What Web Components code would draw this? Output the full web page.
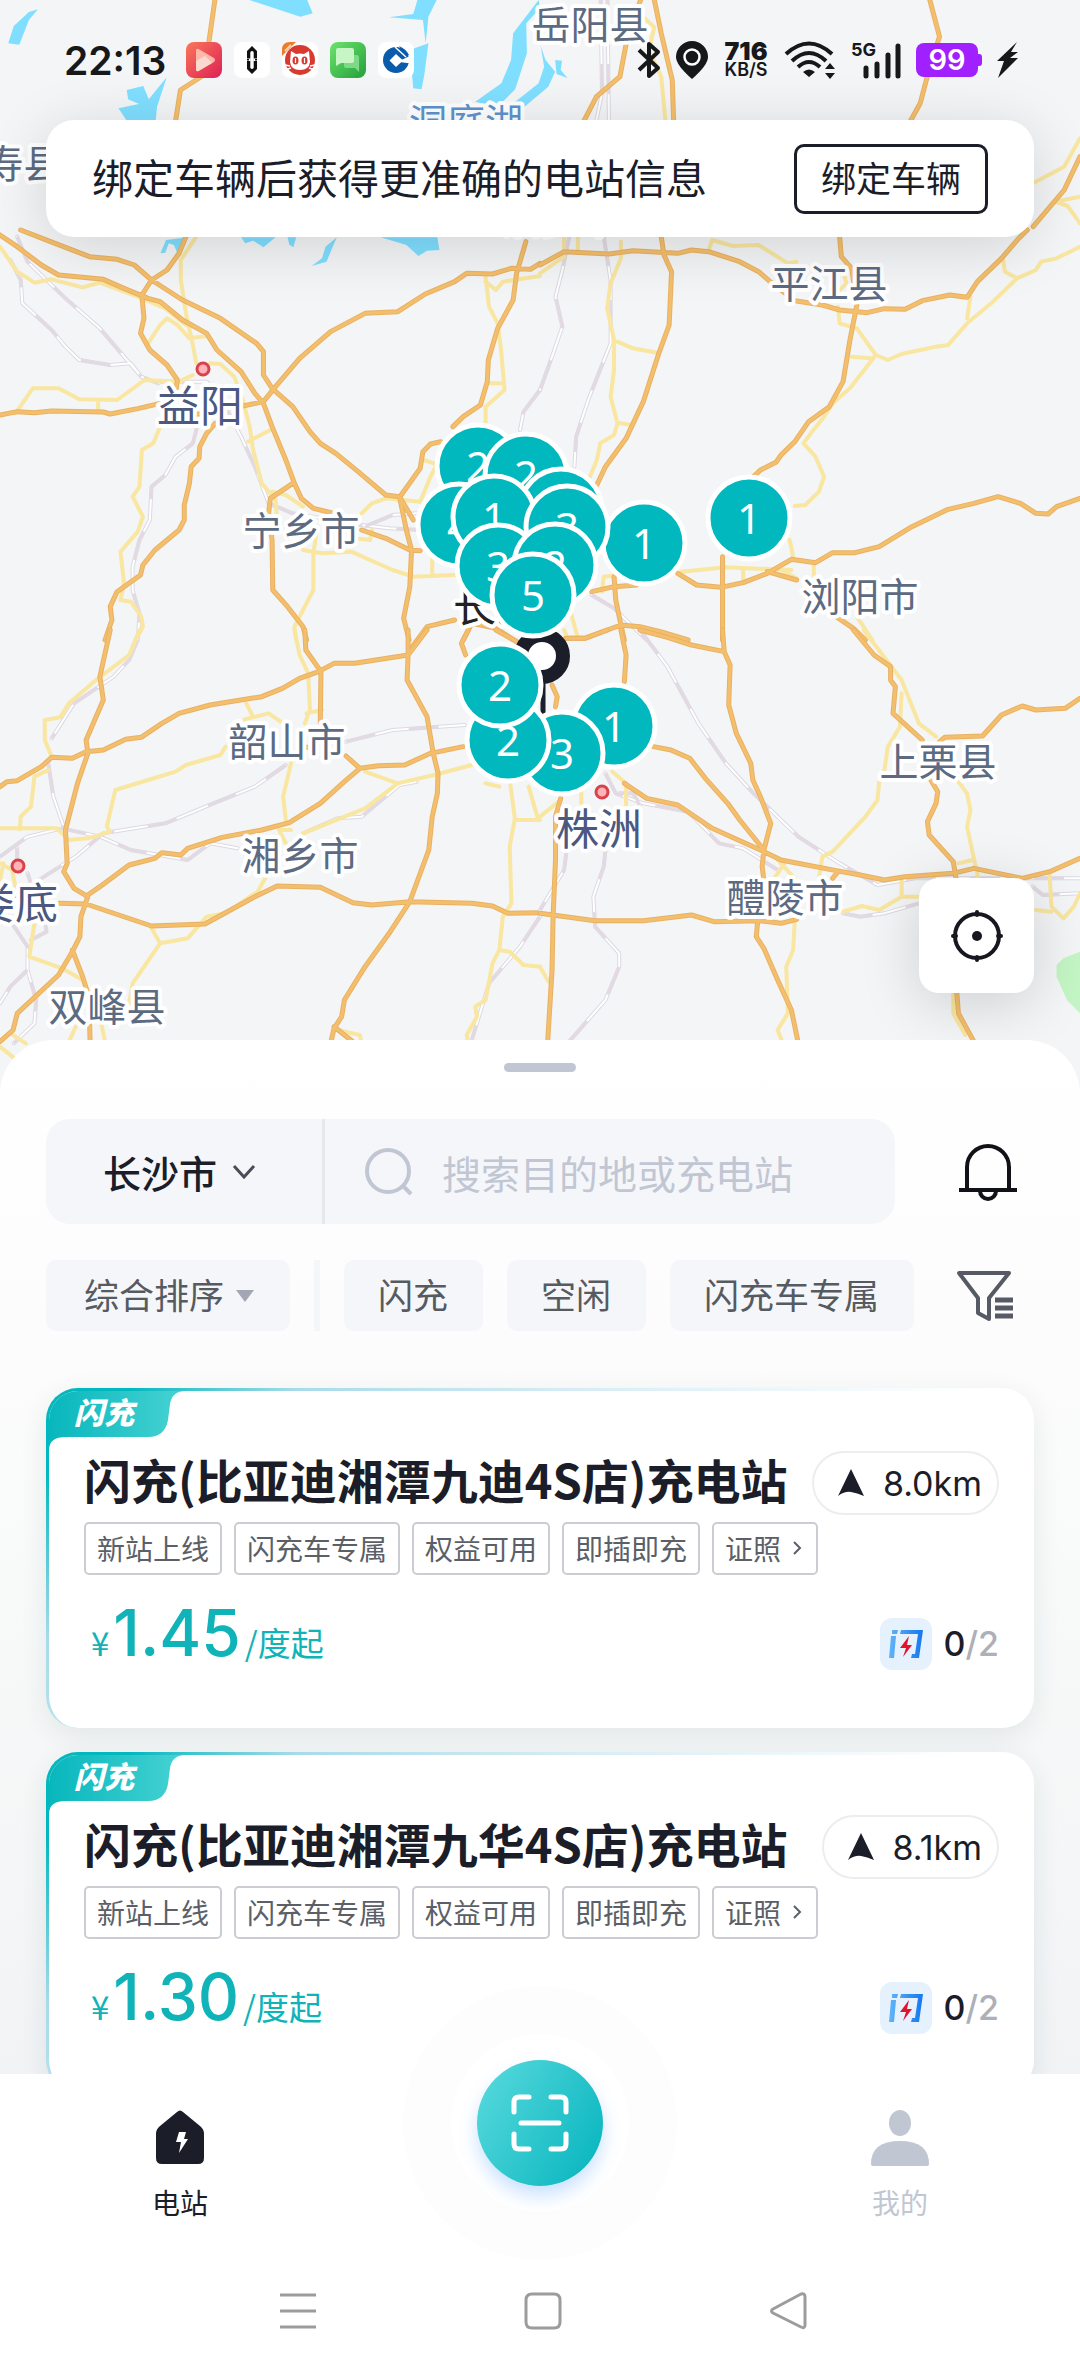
<!DOCTYPE html>
<html lang="zh-CN">
<head>
<meta charset="utf-8">
<meta name="viewport" content="width=device-width, initial-scale=1">
<title>充电站</title>
<style>
  html, body { margin: 0; height: 100%; }
  body {
    --ink: #1b1d28;
    --teal: #00b8be;
    --field: #f5f6fa;
    --mute: #c1c6d3;
    --digits: Inter, "Noto Sans CJK SC", sans-serif;
    font-family: "Noto Sans CJK SC", "Noto Sans", sans-serif;
    color: var(--ink);
    background: #fff;
  }
</style>
</head>
<body>
<charge-app>
  <map-view slot="map"></map-view>
  <status-bar slot="top"></status-bar>
  <bind-banner slot="top">
    绑定车辆后获得更准确的电站信息
    <span slot="action">绑定车辆</span>
  </bind-banner>
  <locate-button slot="top"></locate-button>

  <search-row slot="sheet" city="长沙市" hint="搜索目的地或充电站"></search-row>
  <filter-row slot="sheet" sort="综合排序" chips="闪充,空闲,闪充车专属"></filter-row>
  <station-card slot="sheet" distance="8.0km" price="1.45" free="0" total="2"
    tags="新站上线,闪充车专属,权益可用,即插即充">闪充(比亚迪湘潭九迪4S店)充电站</station-card>
  <station-card slot="sheet" distance="8.1km" price="1.30" free="0" total="2"
    tags="新站上线,闪充车专属,权益可用,即插即充">闪充(比亚迪湘潭九华4S店)充电站</station-card>

  <tab-bar slot="bottom"></tab-bar>
  <system-nav slot="bottom"></system-nav>
</charge-app>

<script>
// Every element below renders once, on connect, from its attributes.
class Base extends HTMLElement {
  connectedCallback() {
    if (this.shadowRoot) return;
    const root = this.attachShadow({ mode: "open" });
    root.innerHTML = `<style>
      :host { display: block; box-sizing: border-box; }
      *, *::before, *::after { box-sizing: border-box; }
      svg { display: block; flex: none; }
      button { font: inherit; color: inherit; background: none; border: 0; padding: 0; margin: 0; }
      ${this.css()}</style>${this.html()}`;
  }
  css() { return ""; }
  list(name) { return this.getAttribute(name).split(","); }
}

// --- page frame: map behind, sheet over its lower edge, bars at the bottom ---

customElements.define("charge-app", class extends Base {
  css() {
    return `
      :host { display: flex; flex-direction: column; height: 100vh; overflow: hidden; }
      .hero { display: grid; flex: none; grid-template: 1100px / minmax(0, 1fr); }
      .under, .over { grid-area: 1 / 1; display: flex; flex-direction: column; }
      .over { z-index: 1; padding-bottom: 107px; }
      ::slotted(map-view) { flex: 1; min-height: 0; }
      .sheet {
        flex: 1 1 0; min-height: 0; overflow: hidden; z-index: 2;
        margin-top: -60px; padding: 23px 46px 0;
        border-radius: 54px 54px 0 0;
        background: linear-gradient(#fff, #fcfcfc 30%, #f7f9f9 60%, #f1f3f5);
        display: flex; flex-direction: column;
      }
      .grip { flex: none; width: 72px; height: 9px; border-radius: 5px; background: var(--mute); margin: 0 auto 47px; }
      .bottom { flex: none; z-index: 3; background: #fff; }
    `;
  }
  html() {
    return `
      <div class="hero">
        <div class="under"><slot name="map"></slot></div>
        <div class="over"><slot name="top"></slot></div>
      </div>
      <main class="sheet"><div class="grip"></div><slot name="sheet"></slot></main>
      <footer class="bottom"><slot name="bottom"></slot></footer>
    `;
  }
});

// --- map ---

// Each tile carries its own drawing grid; the nested <svg> maps it to its place.
const TILES = [
  {
    box: [0, 0, 1080, 260], grid: [1568, 780],
    water: "M782 0 745 100 742 180 728 250 690 305 722 322 748 268 765 160 764 70 784 25ZM595 150 600 265 612 268 616 225 622 130 608 140ZM634 0 622 50 618 130 614 60 565 52 600 42 606 0ZM362 0 436 50 454 40 446 0ZM55 28 42 60 28 134 12 130 20 78 42 36ZM184 270 208 258 216 298 242 232 228 320 226 362 184 362 172 325 202 312 186 298ZM785 138 792 180 806 215 796 260 756 330 744 312 782 250 790 200ZM806 180 816 182 814 210 824 234 808 222Z",
    rails: "M872 0 874 280 866 360M882 0 884 360",
    roads: "M936 55 950 82 942 150 960 230 966 360M1568 415 1545 500 1490 560M1568 590 1532 605 1550 618 1568 670",
    highways: "M312 0 303 130 296 225 262 270 255 362M950 0 960 100 976 240 978 362M912 100 900 230 866 290 848 362M930 0 920 60M1350 0 1364 110 1350 200 1336 310 1322 362M1568 470 1545 570 1500 680",
  },
  {
    box: [0, 230, 540, 410], grid: [1568, 1230],
    water: "M466 70 482 30 545 22 515 70 505 45 490 40 480 68ZM700 22 800 22 765 52 735 32 712 40ZM835 22h25l-8 30-12-8ZM978 22 948 95 905 108 935 85 945 50ZM1105 22 1270 22 1276 60 1240 62 1215 78 1180 45Z",
    rails: "M50 20 80 95 190 205 290 295 410 440 460 460M30 90 60 150 65 220 150 300 190 350 230 390 320 405 380 400 410 440M450 455 600 455 640 500 700 620 740 710 780 820 850 850 1050 885 1130 895 1220 900M575 580 560 640 510 680 480 735 440 770 435 870 405 930 385 1010 385 1080 405 1150 400 1230M1060 890 1140 855 1210 850M1568 480 1520 545 1510 600",
    roads: "M0 50 50 125 100 158 150 148 240 172 290 158 400 200 480 235 540 285M570 20 525 90 525 150 540 250 560 345 570 400M430 340 465 285 485 265 515 285 550 325 600 318M610 400 640 402 680 440 705 510 725 590 735 660 760 760 800 810 805 870M720 635 785 600M45 550 95 475 170 475 230 508 340 510 420 450 520 455 560 435M285 510V545M465 590 445 640 412 660 405 770 385 800 415 860 400 905 350 965 360 1060 350 1110 380 1115 410 1160 415 1190 395 1230M790 785 830 795 880 830M920 900 910 970 910 1080 870 1160 855 1190 860 1230M880 960 935 970 1020 965 1140 1020 1200 1040 1320 1035M1030 925 1075 930 1080 900M1050 850 1080 820 1120 805 1220 815 1250 740 1270 700M1230 690 1260 700M1255 980V1030M1410 140 1420 230 1445 280 1455 360 1465 480 1410 530 1410 580M1420 460H1455M1410 155 1440 180 1460 155 1568 138",
    highways: "M60 0 130 28 260 80 340 88 390 105 440 150 530 210 640 265 745 340 765 365 765 435 790 475 850 530 900 605 930 640 975 670 1040 725 1120 795 1160 800M0 15 50 50 120 105 170 135 300 148 360 175 430 205 465 215 530 270 600 310 630 360 700 425 740 490 765 520 790 590 830 690 855 760 875 805 910 835 970 850M540 20 520 70 485 120 440 150 412 195 418 265 408 310 435 360 485 405 515 450 512 475M0 555 50 545 100 548 150 543 300 546 320 552 400 536 465 520M705 528 765 515 800 470 870 385 960 305 1060 250 1155 245 1235 192 1320 155 1355 130 1430 132 1485 115 1540 118 1568 100M1527 35 1500 130 1490 210 1445 295 1418 390 1415 455 1395 525 1345 560 1315 590M570 552H592M625 580 600 610 580 650 578 685 555 710 550 760 535 825 535 870 520 900 450 960 415 1005 408 1035 340 1085 320 1130 325 1170 305 1230M850 760 785 805 780 850 790 930 792 1080 835 1130 880 1190 890 1230M1160 800 1180 900 1195 960 1190 1070 1172 1165 1188 1230M1160 800 1200 870M1165 795 1220 715 1228 665 1250 642 1280 635M1050 900 1120 925 1190 960 1220 962M1190 1260 1240 1190 1320 1170M1345 1230 1370 1180 1440 1195 1500 1235",
  },
  {
    box: [540, 230, 540, 410], grid: [1568, 1230],
    rails: "M85 20 65 120 45 200 65 290 35 380 0 480M185 20 205 150 205 340 140 510 105 620 100 710M150 1095 215 1135 260 1180 310 1230",
    roads: "M490 60 500 30 560 48 635 45 720 100 745 95M70 20V60M110 20V65M0 130 70 80M235 35 235 85 205 160 195 235 215 330 215 420 205 500 225 580 215 615 175 640 165 690 145 740M225 335 270 355 340 368M225 578 265 585M880 125 890 160 870 180M865 230 870 280 920 295 975 375 960 395 900 475 850 520 825 560 790 605 765 640 800 680 825 740 810 785 770 825 740 828M905 380 960 385M975 375 1010 390 1050 372 1150 350 1185 345 1240 280 1310 220 1385 145 1440 120 1455 95 1500 85 1568 50M1250 200 1240 265M1345 90 1350 125 1385 145M410 1025 540 1012 730 1020M725 930 735 980M795 1000V1040M590 1020V1055M180 1085 185 1040 230 1035M700 1020 745 1045M870 1095V1120M920 1160 965 1230M90 1150 110 1225",
    highways: "M0 105 70 65 200 72 270 62 400 70 440 60 490 65 580 95 635 125 665 152 740 212 820 225 870 240 950 248 1000 236 1060 238 1110 212 1190 195 1240 202 1270 155 1340 85 1390 25 1415 0M352 20 360 75 382 125 375 285 345 370 300 515 250 625 190 710 165 765M870 20 875 80 905 115 920 225 900 330 880 455 840 530 780 575 740 635 700 675 685 697 640 720 620 740M1568 805 1500 830 1475 852 1440 850 1395 820 1330 800 1260 820 1185 838 1080 890 985 950 915 968 850 968 800 998 730 988 660 1030 590 1058 525 1072 455 1065 400 1030M530 980V1230M660 1025 745 1050M860 1160 910 1195 945 1230M150 1085 215 1070 280 1065M215 1040 220 1110 235 1185 245 1230M75 1225 130 1225 235 1185 290 1190 350 1205 430 1230",
  },
  {
    box: [0, 630, 540, 420], grid: [1568, 1260],
    rails: "M400 30 375 90 330 140 215 220 150 325M140 400 155 500 185 590M0 680 80 620 180 595 290 620 380 660 545 690 610 640 690 655M105 755 220 680 300 610 480 580 620 520 740 470 830 405M1005 335 1140 300 1350 285M880 610 980 565 1050 560 1160 465 1210 455M50 655V690M80 730 90 760M35 880 80 950 80 1020 105 1110 100 1180 40 1240M80 1020 30 1070 0 1120M130 870 135 905 90 930M1568 860 1510 950 1420 1060 1370 1230",
    roads: "M405 0 375 75 285 145 200 220 175 262 130 270 130 330 150 380M140 420 100 440 90 530 60 560 58 598M0 595 165 595 200 630 255 625 320 605 310 590 335 480 430 450 510 425 540 405 640 375 655 350M715 220 735 260M710 268 780 250 815 275M855 0 870 75 895 130 900 240 885 280M890 250 935 240M845 400 822 500 830 570M810 600H845M810 600 830 640M880 610 1060 535 1155 460 1260 435 1370 405M1060 425 1155 460M815 680 770 745 740 800M440 895 465 940 545 925 600 860 655 850 740 790M465 940 385 1060 375 1120M100 880 85 980 180 1015 240 1050M1482 465 1495 565 1480 650 1485 820 1460 860 1450 960 1430 1000 1410 1110 1380 1130 1385 1160 1355 1215 1360 1240M1450 960 1480 965 1520 1005 1568 1010M1535 470 1560 560M1495 570H1568M1410 460 1450 470M220 1190 200 1235M295 1185 305 1235M30 1210 75 1240M0 700 35 720 50 800M980 1200 1045 1215 1050 1240M10 700 0 750M0 1250 60 1300",
    highways: "M320 0 305 70 290 140 300 210 250 330 255 370 225 460 190 600 195 700 185 725 215 775 255 800 235 860 232 920 210 965 170 1035 50 1150 38 1200 0 1235M210 960 240 1040 258 1100 262 1250M1240 0 1185 75 1030 100 970 100 925 125 870 145 820 175 760 200 610 225 520 250 470 280 410 322 365 328 300 360 250 365 210 385 150 382 120 410 50 452 20 455 0 470M885 0 888 60 932 125 930 280M888 352H905M1005 378 1045 415 1000 455 930 520 840 578 760 600 645 622 545 655 525 675 470 668 450 685 375 705 290 770 255 795M1045 415 1100 407 1175 405 1250 370 1345 350M1185 0V75L1182 150 1240 260 1258 370 1272 430 1270 490 1255 560 1245 660 1190 815 1130 910 1060 1010 1000 1110 992 1160 970 1195 960 1240M970 1190 1025 1235M38 802H55M172 820 250 822 440 888 595 882 740 800 805 768 930 772 1025 818 1080 825 1190 815 1370 820 1430 828 1475 850 1568 848M1360 0 1340 40 1352 75M1440 0 1500 35",
  },
  {
    box: [540, 630, 540, 420], grid: [1568, 1260],
    park: "M1568 965 1520 985 1500 1005 1500 1040 1530 1110 1568 1150Z",
    rails: "M290 0 370 110 460 280 540 400 620 490 750 620 870 700 980 765 1090 745 1300 745 1568 745M190 430 220 490 300 520 430 545 520 640 590 655 690 720M230 490 270 490 290 525M190 660 185 710 155 800 160 890 230 970 230 1010 190 1110 80 1240M80 640 70 720 0 840M880 850 930 860 1000 850 1100 820M1430 770 1460 795 1568 790",
    roads: "M940 0 1050 150 1100 280 1150 320M1050 190 1045 290 1010 350 1000 420M985 455 980 510 945 560 850 665 820 680 810 745M1215 455 1240 490 1250 540 1240 590 1265 710M1215 700 1255 690M250 460V525M210 425 250 460M120 490V520M0 560 60 510M680 745 710 700M690 690 740 745M880 845 935 828 985 840 1050 800 1100 800M1050 750V800M1480 735 1485 830 1520 865 1550 830 1568 790M1440 840 1485 845M740 870 735 960 715 1010 720 1150 690 1200 705 1240M1200 1090V1150L1235 1215M0 1010 25 1055M70 0 80 25M1270 720V745M650 760V830",
    highways: "M910 0 970 75 1018 110 1018 150 1032 170 1025 250 1110 330M1568 205 1525 235 1440 240 1400 228 1340 255 1285 318 1175 322 1160 335M1135 450 1155 485 1150 520 1125 575 1130 615 1200 695 1208 745M75 25 130 25 195 0M235 0 250 75 245 155M290 0 370 22 440 45 535 65M530 0 535 65 552 105 548 225 570 310 612 400 618 450 640 500 670 580 650 660M330 350 380 360 435 385 480 445 545 520 580 570 650 660M245 460 310 505 400 525 500 595 640 660 700 690 860 722 930 735 1000 750 1060 740 1200 730 1260 715 1400 745 1480 725 1568 685M60 505 45 560 45 690 38 860 35 1020 22 1240M650 660 645 710 650 750M0 850 160 872 300 872 440 855 505 875 640 872 700 880 745 868M632 875 628 920 650 955 690 1050 730 1140 750 1240M865 725 850 745M1210 1085 1215 1150 1260 1235M35 165 50 200 45 230",
  },
];

const COUNTIES = [
  ["岳阳县", 590, 25], ["汉寿县", 4, 164], ["汨罗市", 560, 218], ["平江县", 829, 284],
  ["宁乡市", 301, 531], ["浏阳市", 860, 597], ["韶山市", 287, 742], ["上栗县", 938, 762],
  ["湘乡市", 300, 856], ["醴陵市", 785, 898], ["双峰县", 107, 1007],
];
const CITIES = [["益阳", 200, 406], ["娄底", 15, 903], ["株洲", 599, 829]];
const DOTS = [[203, 369], [18, 866], [602, 792]];

// Painted in order: later clusters cover earlier ones.
const CLUSTERS = [
  [2, 478, 466], [2, 526, 475], [2, 561, 510], [4, 459, 525], [1, 494, 517], [1, 644, 543],
  [3, 567, 527], [3, 498, 566], [2, 555, 565], [5, 533, 595], [1, 749, 518],
  [1, 614, 726], [3, 562, 753], [2, 508, 740], [2, 500, 685],
];

customElements.define("map-view", class extends Base {
  css() {
    return `
      :host { overflow: hidden; background: #f3f5f7; }
      svg.map { width: 100%; height: 100%; }
      path { fill: none; stroke-linejoin: round; stroke-linecap: round; vector-effect: non-scaling-stroke; }
      .water { fill: #80dfff; }
      .park { fill: #c4f5c4; }
      .rail-edge { stroke: #dcd9e2; stroke-width: 4; }
      .rail { stroke: #fff; stroke-width: 2; }
      .rail-dash { stroke: #e3d9e2; stroke-width: 3; stroke-dasharray: 30 34; stroke-linecap: butt; }
      .road { stroke: #f9e6a0; stroke-width: 4; }
      .highway-edge { stroke: #e9b163; stroke-width: 5; }
      .highway { stroke: #f4bf6c; stroke-width: 3; }
      text { text-anchor: middle; }
      .label { fill: #5c6b82; stroke: #fff; stroke-width: 8; stroke-linejoin: round; paint-order: stroke; font-size: 39px; }
      .city { fill: #4b5880; font-size: 43px; }
      .lake { fill: #5d93cf; font-size: 38px; }
      .capital { fill: #222; font-size: 43px; }
      .dot { fill: #ffb3b8; stroke: #d8424a; stroke-width: 3; }
      .cluster circle { fill: var(--teal); stroke: #fff; stroke-width: 5; }
      .cluster text { fill: #fff; font: 400 42px "Noto Sans", sans-serif; }
    `;
  }
  tile({ box: [x, y, w, h], grid, water, park, rails, roads, highways }) {
    const path = (cls, d) => d ? `<path class="${cls}" d="${d}"/>` : "";
    return `
      <svg x="${x}" y="${y}" width="${w}" height="${h}" viewBox="0 0 ${grid.join(" ")}" preserveAspectRatio="none" overflow="visible">
        ${path("water", water)}${path("park", park)}
        ${path("rail-edge", rails)}${path("rail", rails)}${path("rail-dash", rails)}
        ${path("road", roads)}${path("highway-edge", highways)}${path("highway", highways)}
      </svg>`;
  }
  html() {
    const label = (cls, dy) => ([name, x, y]) => `<text class="label ${cls}" x="${x}" y="${y + dy}">${name}</text>`;
    return `
      <svg class="map" viewBox="0 0 1080 1100" preserveAspectRatio="xMidYMin slice">
        ${TILES.map((t) => this.tile(t)).join("")}
        ${COUNTIES.map(label("", 14)).join("")}
        ${CITIES.map(label("city", 16)).join("")}
        ${label("lake", 14)(["洞庭湖", 466, 122])}
        ${label("capital", 16)(["长沙", 496, 606])}
        ${DOTS.map(([x, y]) => `<circle class="dot" cx="${x}" cy="${y}" r="6"/>`).join("")}
        <path d="M543 680V712" stroke="#1b1d28" stroke-width="5"/>
        <circle cx="542" cy="656" r="21" fill="#fff" stroke="#1b1d28" stroke-width="14"/>
        ${CLUSTERS.map(([n, x, y]) => `
          <g class="cluster"><circle cx="${x}" cy="${y}" r="41"/><text x="${x}" y="${y + 16}">${n}</text></g>`).join("")}
      </svg>`;
  }
});

// --- over the map ---

customElements.define("status-bar", class extends Base {
  css() {
    return `
      :host { display: flex; align-items: center; justify-content: space-between; flex: none; height: 120px; padding: 0 62px 0 64px; font-family: var(--digits); color: #17181a; }
      .side { display: flex; align-items: center; }
      .apps { gap: 12px; }
      .state { gap: 15px; }
      time { font-size: 39px; font-weight: 600; margin-right: 8px; }
      .speed { display: grid; width: 46px; text-align: center; font-size: 18px; line-height: 18px; font-weight: 600; }
      .speed b { font-size: 25px; line-height: 20px; }
      .signal { display: flex; width: 50px; }
      .signal span { font-size: 18px; line-height: 18px; font-weight: 700; width: 12px; white-space: nowrap; }
      .signal svg { margin-top: 2px; }
      .battery { display: flex; align-items: center; }
      .battery span { width: 62px; height: 34px; border-radius: 8px; background: #a020ff; color: #fff; font-size: 29px; line-height: 34px; font-weight: 600; text-align: center; }
      .battery i { width: 4px; height: 12px; border-radius: 0 3px 3px 0; background: #a020ff; }
    `;
  }
  html() {
    return `
      <div class="side apps">
        <time>22:13</time>
        <svg width="36" height="36" viewBox="0 0 36 36">
          <defs><linearGradient id="v" x2="1" y2="1"><stop stop-color="#f9785a"/><stop offset="1" stop-color="#de1f55"/></linearGradient></defs>
          <rect width="36" height="36" rx="8" fill="url(#v)"/>
          <path d="M10 8.500Q10 6 12.500 7L28 16Q30 18 28 20L12.500 29Q10 30 10 27.500Z" fill="#fcb8a8"/>
          <path d="M10 27V19L19 14 26 21 12.500 29Q10 30 10 27Z" fill="#fbd9cf"/>
        </svg>
        <svg width="36" height="36" viewBox="0 0 36 36">
          <rect width="36" height="36" rx="8" fill="#fff"/>
          <path d="M18 4 23 9V16.500H13V9ZM13 19H23V27L18 32 13 27Z" fill="#111"/>
          <path d="M13 17.700h2m1.500 0h3m1.500 0h2" stroke="#111" stroke-width="1.500"/>
          <rect x="16.300" y="9" width="3.400" height="18" rx="1.700" fill="#fff"/>
        </svg>
        <svg width="36" height="36" viewBox="0 0 36 36">
          <rect width="36" height="36" rx="8" fill="#fff"/>
          <circle cx="18" cy="18" r="15" fill="#d93a2f"/>
          <path d="M9 9 14 12Q18 11 22 12L27 9 28 20Q27 28 18 28T8 20Z" fill="#fff"/>
          <ellipse cx="13.500" cy="18.500" rx="3" ry="4" fill="#d93a2f"/><ellipse cx="22.500" cy="18.500" rx="3" ry="4" fill="#d93a2f"/>
          <path d="M13.500 16v5M22.500 16v5M15.500 25Q18 26 20.500 25" stroke="#fff" stroke-width="1.200" fill="none"/>
          <path d="M3 23 8 24M3 28 9 26M33 23 28 24M33 28 27 26" stroke="#fff" stroke-width="1.500"/>
          <path d="M0 8Q0 0 8 0H14L0 14Z" fill="#ee7a2c"/><path d="M3 9 9 3" stroke="#fbd3a5" stroke-width="2"/>
        </svg>
        <svg width="36" height="36" viewBox="0 0 36 36">
          <defs><linearGradient id="m" x2="1" y2="1"><stop stop-color="#6de36b"/><stop offset="1" stop-color="#24a03c"/></linearGradient></defs>
          <rect width="36" height="36" rx="8" fill="url(#m)"/>
          <path d="M14 13H27Q29 13 29 15V30L25 26H16Q14 26 14 24Z" fill="#7dd888"/>
          <path d="M8 6H22Q24 6 24 8V19Q24 21 22 21H11L6 24V8Q6 6 8 6Z" fill="#c8f5c6"/>
        </svg>
        <svg width="36" height="36" viewBox="0 0 36 36">
          <rect width="36" height="36" rx="8" fill="#fff"/>
          <circle cx="18" cy="18" r="13" fill="#0a5bab"/>
          <path d="M18 12 25 18.500 18 25 11.500 18.500Z" fill="#fff"/>
          <path d="M24 18.500 34 14V21L24 19.500ZM17 5 28 15" stroke="#fff" stroke-width="1.500" fill="#fff"/>
          <path d="M21 4Q28 7 31 13L28 14Z" fill="#0a5bab"/>
        </svg>
      </div>
      <div class="side state">
        <svg width="24" height="38" viewBox="0 0 24 38" fill="none" stroke="currentColor" stroke-width="4" stroke-linejoin="round">
          <path d="M2 9 21 27 12 35V3L21 11 2 29"/>
        </svg>
        <svg width="32" height="38" viewBox="0 0 32 38">
          <path d="M16 38Q0 24 0 16A16 16 0 0 1 32 16Q32 24 16 38Z" fill="currentColor"/>
          <circle cx="16" cy="16" r="7.500" fill="none" stroke="#fff" stroke-width="2.500"/>
        </svg>
        <div class="speed"><b>716</b>KB/S</div>
        <svg width="52" height="38" viewBox="0 0 52 38" fill="none" stroke="currentColor" stroke-width="4">
          <path d="M2 13Q25-8 48 13M8 20Q25 4 42 20M14 26Q25 16 36 26"/>
          <path d="M19 31Q25 26 31 31L25 36ZM46 22 51 28H41ZM46 38 51 32H41Z" fill="currentColor" stroke="none"/>
        </svg>
        <div class="signal"><span>5G</span>
          <svg width="38" height="36" viewBox="0 0 38 36" stroke="currentColor" stroke-width="5" stroke-linecap="round">
            <path d="M3 25V33M14 21V33M25 12V33M35 3V33"/>
          </svg>
        </div>
        <div class="battery"><span>99</span><i></i></div>
        <svg width="21" height="36" viewBox="0 0 21 36"><path d="M20 0 0 19H7L1 36 21 16H13L21 10H14Z" fill="currentColor"/></svg>
      </div>`;
  }
});

customElements.define("bind-banner", class extends Base {
  css() {
    return `
      :host {
        display: flex; align-items: center; justify-content: space-between; flex: none;
        height: 117px; margin: 0 46px; padding: 0 46px; border-radius: 28px;
        background: #fff; box-shadow: 0 10px 60px rgba(0, 0, 0, .14);
        font-size: 41px;
      }
      .text { padding-bottom: 6px; }
      button { height: 70px; padding: 0 24px 4px; border: 3px solid var(--ink); border-radius: 10px; font-size: 35px; line-height: 60px; }
    `;
  }
  html() { return `<span class="text"><slot></slot></span><button type="button"><slot name="action"></slot></button>`; }
});

customElements.define("locate-button", class extends Base {
  css() {
    return `
      :host { margin: auto 46px 0 auto; }
      button { display: grid; place-items: center; width: 115px; height: 115px; border-radius: 20px; background: #fff; box-shadow: 0 10px 60px rgba(0, 0, 0, .16); }
    `;
  }
  html() {
    return `
      <button type="button" aria-label="定位">
        <svg width="54" height="54" viewBox="0 0 54 54" fill="none" stroke="#17181f" stroke-width="4" stroke-linecap="round">
          <circle cx="27" cy="27" r="22"/><circle cx="27" cy="27" r="5" fill="#17181f" stroke="none"/>
          <path d="M27 3V6M27 48V51M3 27H6M48 27H51"/>
        </svg>
      </button>`;
  }
});

// --- sheet ---

customElements.define("search-row", class extends Base {
  css() {
    return `
      :host { display: flex; align-items: center; justify-content: space-between; flex: none; padding-right: 16px; }
      form { display: flex; flex: 1; height: 105px; margin-right: 63px; border-radius: 24px; background: var(--field); overflow: hidden; }
      label { display: flex; align-items: center; }
      .city { flex: none; width: 279px; padding-left: 57px; gap: 14px; border-right: 3px solid #e6e8ee; }
      .find { flex: 1; min-width: 0; padding-left: 40px; gap: 29px; }
      select, input { appearance: none; border: 0; padding: 0; margin: 0; background: none; font: inherit; color: inherit; outline: 0; opacity: 1; }
      select { font-size: 38px; font-weight: 500; }
      input { flex: 1; min-width: 0; height: 60px; font-size: 39px; }
      input::placeholder { color: var(--mute); opacity: 1; }
    `;
  }
  html() {
    return `
      <form>
        <label class="city"><select aria-label="城市"><option>${this.getAttribute("city")}</option></select>
          <svg width="24" height="16" viewBox="0 0 24 16" fill="none" stroke="#4a4d57" stroke-width="3"><path d="M2 2 12 13 22 2"/></svg>
        </label>
        <label class="find">
          <svg width="48" height="48" viewBox="0 0 48 48" fill="none" stroke="#c1c6d3" stroke-width="4"><circle cx="23" cy="23" r="21"/><path d="M37 37 46 46"/></svg>
          <input type="text" placeholder="${this.getAttribute("hint")}">
        </label>
      </form>
      <button type="button" aria-label="通知">
        <svg width="60" height="60" viewBox="0 0 60 60" fill="none" stroke="#111217" stroke-width="4">
          <path d="M9 48V25A21 21 0 0 1 51 25V48M1 48H59M22 49A8 8 0 0 0 38 49"/>
        </svg>
      </button>`;
  }
});

customElements.define("filter-row", class extends Base {
  css() {
    return `
      :host { display: flex; align-items: center; flex: none; gap: 24px; margin: 36px 0 57px; padding-right: 20px; color: #565a61; font-size: 35px; }
      label, .chip { flex: none; height: 71px; border-radius: 10px; background: var(--field); }
      label { display: flex; align-items: center; gap: 11px; width: 244px; padding-left: 38px; }
      .chip { padding: 0 35px 4px 34px; }
      .rule { flex: none; width: 6px; height: 71px; background: var(--field); }
      select { appearance: none; border: 0; padding: 0 0 4px; margin: 0; background: none; font: inherit; color: inherit; opacity: 1; }
      .more { margin-left: auto; }
    `;
  }
  html() {
    return `
      <label><select aria-label="排序"><option>${this.getAttribute("sort")}</option></select>
        <svg width="18" height="12" viewBox="0 0 18 12"><path d="M0 0H18L9 12Z" fill="#a3a7b3"/></svg>
      </label>
      <span class="rule"></span>
      ${this.list("chips").map((c) => `<button type="button" class="chip">${c}</button>`).join("")}
      <button type="button" class="more" aria-label="筛选">
        <svg width="58" height="52" viewBox="0 0 58 52" fill="none" stroke="#565a64" stroke-width="4" stroke-linejoin="round">
          <path d="M3 3H53L33 28V49L22 43V28Z"/><path d="M39 30H57M39 38H57M39 46H57" stroke-width="5"/>
        </svg>
      </button>`;
  }
});

customElements.define("station-card", class extends Base {
  css() {
    return `
      :host {
        flex: none; height: 340px; margin-bottom: 24px; border-radius: 32px; overflow: hidden;
        border: solid transparent; border-width: 3px 0 0 3px;
        background:
          linear-gradient(#fff, #fff) padding-box,
          radial-gradient(circle at 0 0, var(--teal) 8%, #a8dbea 24%, #d5ecf5 50%, #fff 88%) border-box;
        box-shadow: 0 8px 28px rgba(30, 50, 60, .09);
      }
      .badge { margin: -3px 0 0 -3px; display: grid; width: 140px; height: 62px; }
      .badge > * { grid-area: 1 / 1; }
      .badge span { padding-left: 28px; color: #fff; font-size: 30px; line-height: 47px; font-weight: 900; font-style: italic; }
      .body { padding: 1px 35px 0; }
      .head { display: flex; align-items: center; justify-content: space-between; gap: 16px; height: 64px; }
      h2 { margin: 0; padding-bottom: 8px; font-size: 47px; line-height: 56px; font-weight: 700; white-space: nowrap; }
      .distance { display: flex; align-items: center; gap: 18px; height: 64px; padding: 0 15px 0 23px; border: 2px solid #ededf0; border-radius: 32px; font: 400 34px var(--digits); }
      ul { display: flex; gap: 12px; list-style: none; margin: 7px 0 0; padding: 0; }
      li { height: 53px; padding: 0 11px; border: 2px solid #cbcdd2; border-radius: 5px; color: #5b5f68; font-size: 28px; line-height: 48px; }
      li a { display: flex; align-items: center; gap: 8px; color: inherit; text-decoration: none; }
      .foot { display: flex; align-items: center; justify-content: space-between; height: 52px; margin-top: 43px; }
      .price { display: flex; align-items: baseline; gap: 4px; padding: 0 0 14px 7px; color: #0fb3b8; font-size: 33px; line-height: 52px; }
      .price b { font: 500 64px/52px var(--digits); }
      .slots { display: flex; align-items: center; gap: 12px; font: 500 34px/52px var(--digits); }
      .slots i { font-style: normal; color: #adb0b8; }
    `;
  }
  html() {
    const at = (name) => this.getAttribute(name);
    return `
      <div class="badge">
        <svg width="140" height="62" viewBox="0 0 140 62">
          <defs><linearGradient id="g" x2="1"><stop stop-color="#06b6bc"/><stop offset="1" stop-color="#48d3d3"/></linearGradient></defs>
          <path d="M0 0H140V3Q126 3 124 16L122 32Q119 49 102 49H20Q3 49 3 62H0Z" fill="url(#g)"/>
        </svg>
        <span>闪充</span>
      </div>
      <div class="body">
        <div class="head">
          <h2><slot></slot></h2>
          <div class="distance">
            <svg width="28" height="28" viewBox="0 0 28 28"><path d="M14 0 27 27Q20 24 14 23T1 27Z" fill="#1b1d28"/></svg>${at("distance")}
          </div>
        </div>
        <ul>
          ${this.list("tags").map((t) => `<li>${t}</li>`).join("")}
          <li><a href="#license">证照<svg width="16" height="16" viewBox="0 0 16 16" fill="none" stroke="#5b5f68" stroke-width="2"><path d="M5 2 11 8 5 14"/></svg></a></li>
        </ul>
        <div class="foot">
          <div class="price">¥<b>${at("price")}</b><span>/度起</span></div>
          <div class="slots">
            <svg width="52" height="52" viewBox="0 0 52 52">
              <defs><linearGradient id="s" x2="1"><stop stop-color="#62b4f8"/><stop offset="1" stop-color="#1677f0"/></linearGradient></defs>
              <rect width="52" height="52" rx="12" fill="#e5f1fd"/>
              <path d="M12 12H18L17 16H12ZM11 18H16L14 40H9ZM21 12H43L39 40H31L32 36H35L38 16H20Z" fill="url(#s)"/>
              <path d="M29 18 20 30H26L23 39 32 27H27Z" fill="#e0142c"/>
            </svg>
            <span>${at("free")}<i>/${at("total")}</i></span>
          </div>
        </div>
      </div>`;
  }
});

// --- bottom bars ---

customElements.define("tab-bar", class extends Base {
  css() {
    return `
      nav { display: grid; grid-template-columns: repeat(3, 1fr); justify-items: center; height: 171px; }
      a { display: flex; flex-direction: column; align-items: center; gap: 14px; padding-top: 35px; color: inherit; font-size: 28px; line-height: 42px; text-decoration: none; }
      a.idle { color: var(--mute); }
      .scan {
        display: grid; place-items: center; width: 126px; height: 126px; margin-top: -14px; border-radius: 50%;
        background: linear-gradient(120deg, #5adbde, #04b3bd);
        box-shadow: 0 10px 18px rgba(70, 150, 255, .28), 0 0 0 26px #fff, 0 0 0 74px rgba(250, 250, 250, .3);
      }
    `;
  }
  html() {
    return `
      <nav>
        <a href="#stations">
          <svg width="58" height="58" viewBox="0 0 58 58">
            <path d="M5 25Q5 20 9 17L26 3Q29 0 32 3L49 17Q53 20 53 25V49Q53 55 47 55H11Q5 55 5 49Z" fill="#1b1d28"/>
            <path d="M28 23H35L33 30H37L28 44 30 33H25Z" fill="#fff"/>
          </svg>电站</a>
        <button type="button" class="scan" aria-label="扫码">
          <svg width="60" height="60" viewBox="0 0 60 60" fill="none" stroke="#fff" stroke-width="5" stroke-linecap="round">
            <path d="M4 19V9Q4 4 9 4H19M41 4H51Q56 4 56 9V19M56 41V51Q56 56 51 56H41M19 56H9Q4 56 4 51V41M11 30H49"/>
          </svg>
        </button>
        <a href="#me" class="idle">
          <svg width="58" height="58" viewBox="0 0 58 58" fill="#c1c6d3">
            <ellipse cx="29" cy="14" rx="11" ry="13"/><path d="M0 55Q0 32 29 32T58 55Q58 57 56 57H2Q0 57 0 55Z"/>
          </svg>我的</a>
      </nav>`;
  }
});

customElements.define("system-nav", class extends Base {
  css() { return `:host { display: flex; justify-content: center; align-items: center; gap: 207px; height: 131px; padding-left: 5px; }`; }
  html() {
    const icon = (name, d) => `
      <button type="button" aria-label="${name}">
        <svg width="38" height="38" viewBox="0 0 38 38" fill="none" stroke="#9c9c9c" stroke-width="3" stroke-linejoin="round"><path d="${d}"/></svg>
      </button>`;
    return icon("最近任务", "M1 3H37M1 19H37M1 35H37")
      + icon("主屏幕", "M8 2H30Q36 2 36 8V30Q36 36 30 36H8Q2 36 2 30V8Q2 2 8 2Z")
      + icon("返回", "M32 2Q36 1 36 5V33Q36 37 32 35L4 21Q1 19 4 17Z");
  }
});
</script>
</body>
</html>
